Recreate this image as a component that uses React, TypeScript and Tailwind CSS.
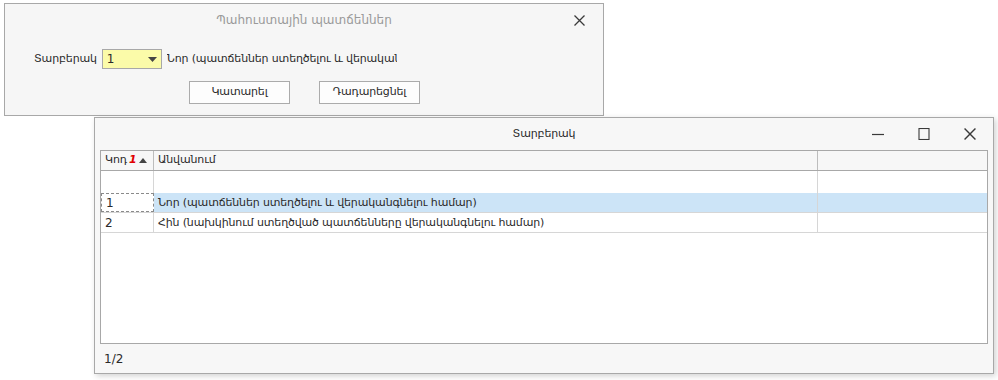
import React from 'react';

const font = { fontFamily: '"DejaVu Sans", "Noto Sans", sans-serif' };

const CloseIcon = ({ size = 11 }: { size?: number }) => (
  <svg width={size} height={size} viewBox="0 0 11 11" className="block">
    <path d="M0.5 0.5 L10.5 10.5 M10.5 0.5 L0.5 10.5" stroke="#3a3a3a" strokeWidth="1.3" fill="none" />
  </svg>
);

const rows = [
  { code: '1', name: 'Նոր (պատճեններ ստեղծելու և վերականգնելու համար)' },
  { code: '2', name: 'Հին (նախկինում ստեղծված պատճենները վերականգնելու համար)' },
];

const BackupDialog = () => (
  <div className="ml-[4px] mt-[3px] flex h-[113px] w-[600px] flex-col border border-[#a8a8a8] bg-[#f6f6f6]">
    <div className="relative flex h-[32px] items-center justify-center">
      <span className="text-[12px] text-[#9a9a9a]">Պահուստային պատճեններ</span>
      <div className="absolute right-[18px] top-[11px]">
        <CloseIcon />
      </div>
    </div>
    <div className="mt-[13px] flex items-center pl-[29px] text-[11px] tracking-[-0.15px] text-[#2a2a2a]">
      <span className="mr-[5px]">Տարբերակ</span>
      <div className="flex h-[20px] w-[60px] items-center justify-between border border-[#a8a8a8] bg-[#fbfba9] pl-[4px] pr-[4px] text-[12px]">
        <span>1</span>
        <svg width="9" height="5" viewBox="0 0 9 5">
          <path d="M0 0 L9 0 L4.5 5 Z" fill="#444" />
        </svg>
      </div>
      <div className="ml-[5px] w-[230px] overflow-hidden whitespace-nowrap">Նոր (պատճեններ ստեղծելու և վերականգնելու համար)</div>
    </div>
    <div className="mt-[12px] flex gap-[29px] pl-[184px] text-[11px] tracking-[-0.15px] text-[#2a2a2a]">
      <div className="flex h-[23px] w-[101px] items-center justify-center border border-[#ababab] bg-[#fdfdfd]">Կատարել</div>
      <div className="flex h-[23px] w-[101px] items-center justify-center border border-[#ababab] bg-[#fdfdfd]">Դադարեցնել</div>
    </div>
  </div>
);

const VariantWindow = () => (
  <div className="ml-[94px] mt-[1px] flex h-[257px] w-[900px] flex-col border border-[#a8a8a8] bg-[#f7f7f7] shadow-[2px_2px_6px_rgba(0,0,0,0.18)]">
    <div className="relative flex h-[32px] items-center justify-center text-[11px] tracking-[-0.15px] text-[#2a2a2a]">
      <span>Տարբերակ</span>
      <div className="absolute right-[17px] top-[10px] flex items-center gap-[34px]">
        <svg width="12" height="12" viewBox="0 0 12 12" className="block">
          <path d="M0 6.5 L12 6.5" stroke="#3a3a3a" strokeWidth="1.2" />
        </svg>
        <svg width="12" height="12" viewBox="0 0 12 12" className="block">
          <rect x="1" y="0.5" width="10" height="11" stroke="#3a3a3a" strokeWidth="1.1" fill="none" />
        </svg>
        <CloseIcon size={12} />
      </div>
    </div>
    <div className="mx-[5px] flex h-[194px] flex-col border border-[#a8a8a8] bg-white text-[11px] tracking-[-0.15px] text-[#2a2a2a]">
      <div className="flex h-[20px] border-b border-[#a8a8a8] bg-[#f7f7f7]">
        <div className="flex w-[53px] items-center border-r border-[#bdbdbd] pl-[4px]">
          <span>Կոդ</span>
          <span className="ml-[2px] font-bold italic text-[#e00000]">1</span>
          <svg width="8" height="5" viewBox="0 0 8 5" className="ml-[3px]">
            <path d="M0 5 L8 5 L4 0 Z" fill="#444" />
          </svg>
        </div>
        <div className="flex w-[664px] items-center border-r border-[#bdbdbd] pl-[4px]">Անվանում</div>
        <div className="flex-1" />
      </div>
      <div className="flex h-[22px]">
        <div className="w-[53px] border-r border-[#d6d6d6]" />
        <div className="w-[664px] border-r border-[#d6d6d6]" />
        <div className="flex-1" />
      </div>
      {rows.map((r, i) => (
        <div
          key={r.code}
          className={`flex h-[20px] border-b border-[#d6d6d6] ${i === 0 ? 'bg-[#cce4f7]' : ''}`}
        >
          <div
            className={`flex w-[53px] items-center pl-[4px] pt-[1px] text-[12px] ${i === 0 ? 'border border-dashed border-[#8a8a8a] bg-white' : 'border-r border-[#d6d6d6]'}`}
          >
            {r.code}
          </div>
          <div className="flex w-[664px] items-center whitespace-nowrap border-r border-[#d6d6d6] pl-[4px] pt-[1px]">
            {r.name}
          </div>
          <div className="flex-1" />
        </div>
      ))}
    </div>
    <div className="flex flex-1 items-center pl-[9px] text-[12px] text-[#2a2a2a]">1/2</div>
  </div>
);

const App = () => {
  return (
    <div className="h-[380px] w-[998px] overflow-hidden bg-white" style={font}>
      <BackupDialog />
      <VariantWindow />
    </div>
  );
};

export default App;
